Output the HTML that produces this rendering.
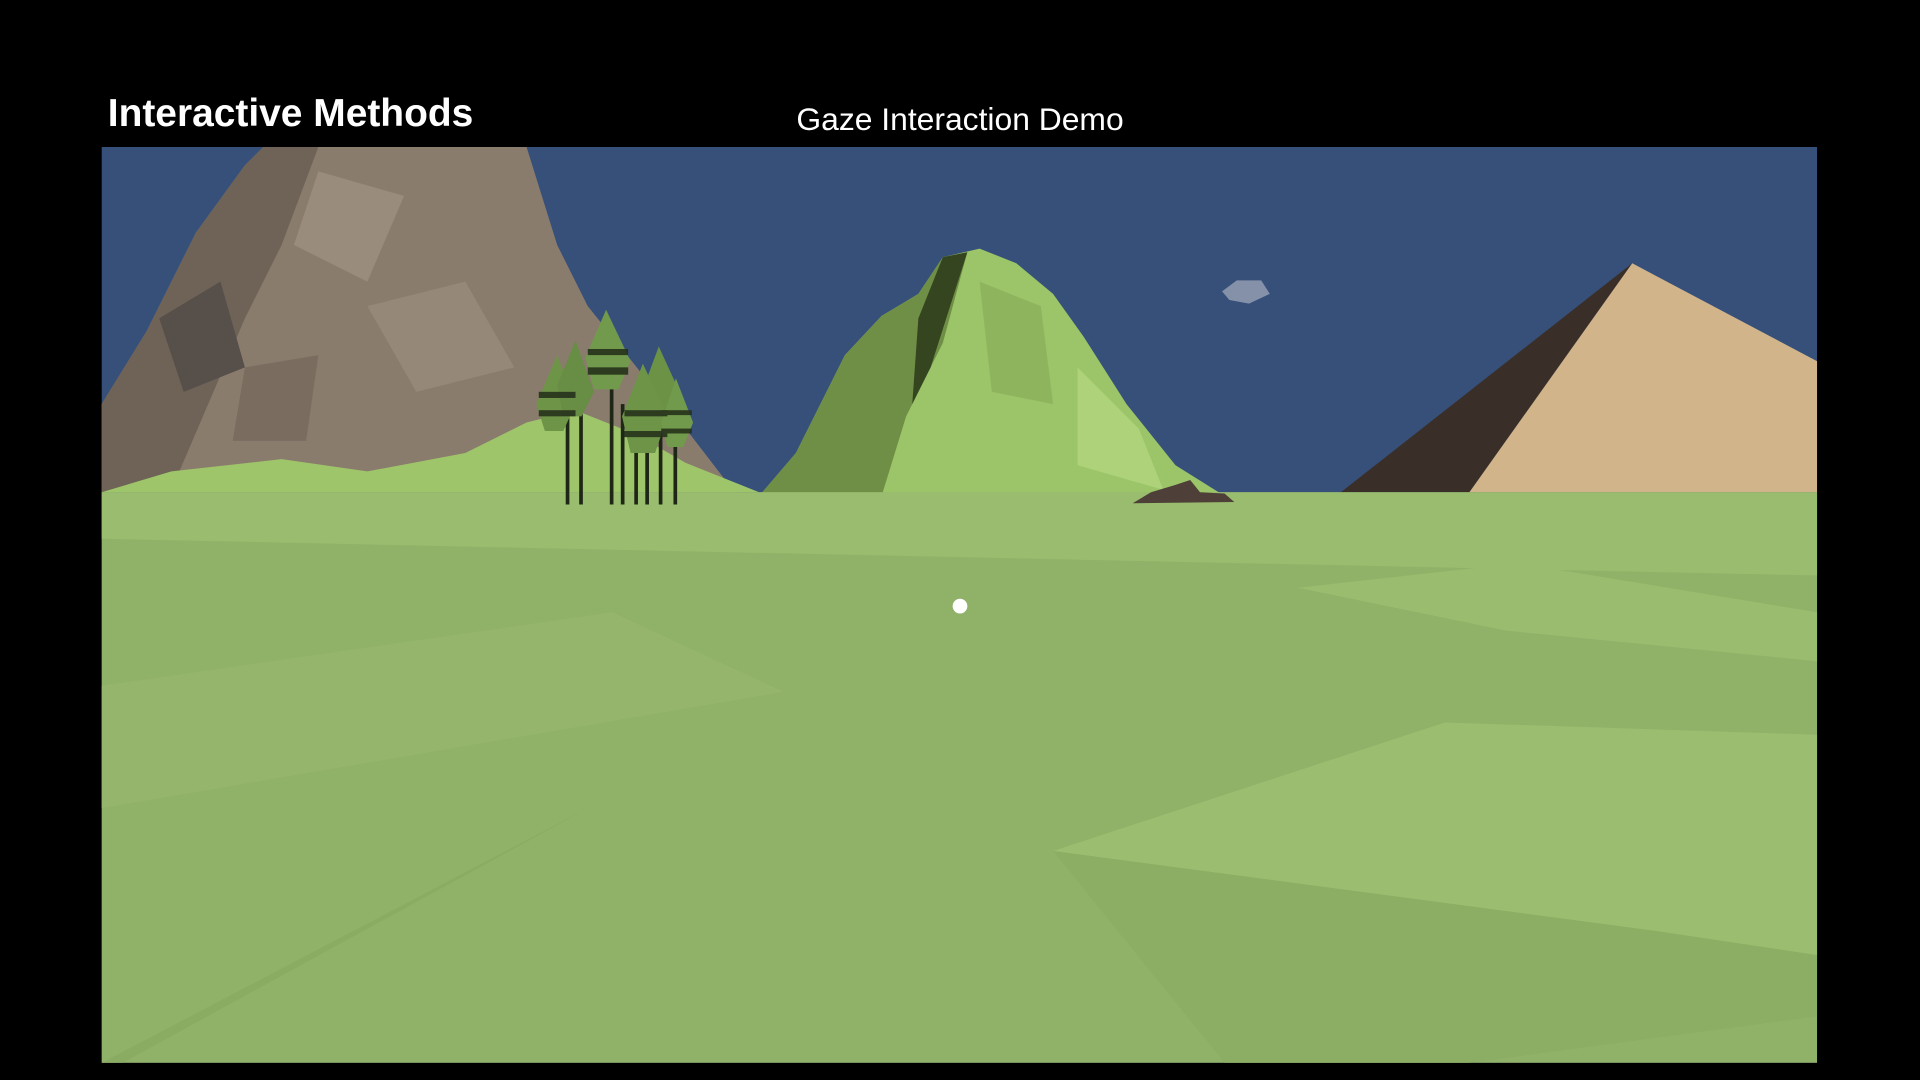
<!DOCTYPE html>
<html><head><meta charset="utf-8"><style>
html,body{margin:0;padding:0;background:#000;width:1920px;height:1080px;overflow:hidden}
svg{display:block}
</style></head><body>
<svg width="1920" height="1080" viewBox="0 0 1568 882" xmlns="http://www.w3.org/2000/svg">
<rect width="1568" height="882" fill="#000"/>
<text x="88" y="103" font-family="Liberation Sans, sans-serif" font-weight="bold" font-size="31.8" fill="#fff">Interactive Methods</text>
<text x="784" y="106" text-anchor="middle" font-family="Liberation Sans, sans-serif" font-size="26" fill="#fff">Gaze Interaction Demo</text>
<svg x="83" y="120" width="1401" height="748" viewBox="83 120 1401 748">
<rect x="83" y="120" width="1401" height="748" fill="#36507a"/>
<polygon points="83,330 120,270 160,190 200,135 215,120 430,120 455,200 480,250 520,300 560,350 600,402 83,402" fill="#8a7c6d"/>
<polygon points="83,330 120,270 160,190 200,135 215,120 260,120 230,200 200,260 170,330 140,400 83,402" fill="#6e6356"/>
<polygon points="130,260 180,230 200,300 150,320" fill="#57504a"/>
<polygon points="260,140 330,160 300,230 240,200" fill="#9a8c7c"/>
<polygon points="300,250 380,230 420,300 340,320" fill="#968878"/>
<polygon points="200,300 260,290 250,360 190,360" fill="#7a6d60"/>
<polygon points="83,402 140,385 230,375 300,385 380,370 430,345 470,335 520,355 560,378 620,402" fill="#9ec56a"/>
<polygon points="620,405 650,370 690,290 720,258 750,240 770,210 800,203 830,215 860,240 885,275 920,330 960,380 1000,405" fill="#9cc468"/>
<polygon points="620,405 650,370 690,290 720,258 750,240 770,210 790,206 770,280 740,340 720,405" fill="#6f8f46"/>
<polygon points="770,210 790,206 760,300 745,330 750,260" fill="#34451f"/>
<polygon points="800,230 850,250 860,330 810,320" fill="#8fb45e"/>
<polygon points="880,300 930,350 950,400 880,380" fill="#aed27a"/>
<polygon points="1095,402 1333,215 1200,402" fill="#3a2f28"/>
<polygon points="1333,215 1484,295 1484,402 1200,402" fill="#d2b48a"/>
<polygon points="998,238 1010,229 1030,229 1037,240 1020,248 1004,245" fill="#8591a8"/>
<rect x="83" y="402" width="1401" height="466" fill="#90b168"/>
<polygon points="83,402 1484,402 1484,470 83,440" fill="#99bc6f"/>
<polygon points="860,695 1180,590 1484,600 1484,780 1350,760" fill="#9bbd70"/>
<polygon points="83,560 500,500 640,565 83,660" fill="#94b56b"/>
<polygon points="860,695 1000,868 1200,868 1484,830 1484,780 1350,760" fill="#8cad64"/>
<polygon points="83,868 480,660 100,868" fill="#8aab62"/>
<polygon points="1060,480 1240,460 1484,500 1484,540 1230,515" fill="#9abc6f"/>
<polygon points="925,411 940,402 960,396 972,392 980,402 1000,403 1008,410" fill="#4e4038"/>
<g fill="#1e2616">
<rect x="462" y="320" width="3" height="92"/><rect x="473" y="320" width="3" height="92"/>
<rect x="498" y="300" width="3" height="112"/><rect x="507" y="330" width="3" height="82"/>
<rect x="518" y="350" width="3" height="62"/><rect x="527" y="350" width="3" height="62"/>
<rect x="538" y="330" width="3" height="82"/><rect x="550" y="350" width="3" height="62"/>
</g>
<g>
<polygon points="455,290 470,330 460,352 445,352 438,330" fill="#6e9448"/>
<polygon points="470,278 485,320 475,340 460,340 455,315" fill="#688d44"/>
<polygon points="495,253 515,295 505,318 485,318 478,292" fill="#729a4c"/>
<polygon points="538,283 555,320 545,340 530,340 525,318" fill="#6c9246"/>
<polygon points="525,297 545,340 535,370 515,370 508,340" fill="#6e9448"/>
<polygon points="552,309 566,345 558,365 545,365 540,345" fill="#729a4c"/>
<g fill="#26321b" opacity="0.9">
<rect x="440" y="320" width="30" height="5"/><rect x="440" y="335" width="30" height="5"/>
<rect x="480" y="285" width="33" height="5"/><rect x="480" y="300" width="33" height="6"/>
<rect x="510" y="335" width="35" height="5"/><rect x="510" y="352" width="35" height="5"/>
<rect x="540" y="335" width="25" height="4"/><rect x="540" y="350" width="25" height="4"/>
</g>
</g>
<circle cx="784" cy="495" r="6" fill="#fff"/>
</svg>
</svg>
</body></html>
